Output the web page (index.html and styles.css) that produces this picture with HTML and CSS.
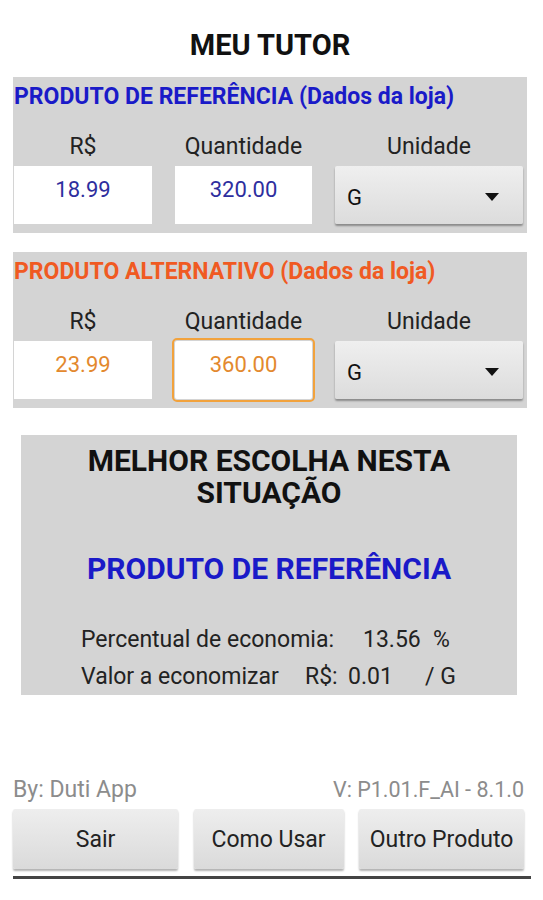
FILE: index.html
```html
<!DOCTYPE html>
<html lang="pt-br">
<head>
  <meta charset="UTF-8" />
  <meta name="viewport" content="width=device-width, initial-scale=1" />
  <title>Meu Tutor</title>
  <link rel="stylesheet" href="styles.css">
</head>
<body>
  <div class="tela">
    <h1 class="titulo">MEU TUTOR</h1>

    <section class="painel">
      <div class="painel-titulo referencia">PRODUTO DE REFERÊNCIA (Dados da loja)</div>
      <div class="campos">
        <div class="campo">
          <span class="rotulo">R$</span>
          <div class="caixa valor-ref">18.99</div>
        </div>
        <div class="campo">
          <span class="rotulo">Quantidade</span>
          <div class="caixa valor-ref">320.00</div>
        </div>
        <div class="campo">
          <span class="rotulo">Unidade</span>
          <div class="seletor">
            <span>G</span>
            <svg width="14" height="8" viewBox="0 0 14 8"><path d="M0 0h14L7 8z" fill="#111"/></svg>
          </div>
        </div>
      </div>
    </section>

    <section class="painel">
      <div class="painel-titulo alternativo">PRODUTO ALTERNATIVO (Dados da loja)</div>
      <div class="campos">
        <div class="campo">
          <span class="rotulo">R$</span>
          <div class="caixa valor-alt">23.99</div>
        </div>
        <div class="campo">
          <span class="rotulo">Quantidade</span>
          <div class="caixa valor-alt focado">360.00</div>
        </div>
        <div class="campo">
          <span class="rotulo">Unidade</span>
          <div class="seletor">
            <span>G</span>
            <svg width="14" height="8" viewBox="0 0 14 8"><path d="M0 0h14L7 8z" fill="#111"/></svg>
          </div>
        </div>
      </div>
    </section>

    <section class="resultado">
      <div class="resultado-titulo">MELHOR ESCOLHA NESTA<br>SITUAÇÃO</div>
      <div class="escolha">PRODUTO DE REFERÊNCIA</div>
      <div class="linha">
        <span class="l1-rotulo">Percentual de economia:</span>
        <span class="l1-valor">13.56</span>
        <span>%</span>
      </div>
      <div class="linha">
        <span class="l2-rotulo">Valor a economizar</span>
        <span class="l2-moeda">R$:</span>
        <span class="l2-valor">0.01</span>
        <span>/ G</span>
      </div>
    </section>

    <div class="rodape">
      <span>By: Duti App</span>
      <span class="versao">V: P1.01.F_AI - 8.1.0</span>
    </div>
    <div class="botoes">
      <button class="b-curto">Sair</button>
      <button class="b-medio">Como Usar</button>
      <button class="b-curto">Outro Produto</button>
    </div>
    <div class="barra"></div>
  </div>
</body>
</html>
```

FILE: styles.css
```css
body {
  margin: 0;
  background: #fff;
  font-family: Roboto, "Noto Sans", sans-serif;
  color: #222;
}

.tela {
  width: 543px;
  padding: 0 16px 0 13px;
  box-sizing: border-box;
}

.titulo {
  margin: 30px 0 17px;
  font-size: 29px;
  line-height: 30px;
  font-weight: bold;
  text-align: center;
  color: #111;
}

.painel {
  background: #d4d4d4;
  padding: 8px 4px 9px 1px;
  margin-bottom: 19px;
}

.painel-titulo {
  font-size: 23px;
  line-height: 24px;
  font-weight: bold;
  margin-bottom: 26px;
  white-space: nowrap;
}

.referencia {
  color: #1a1ac8;
}

.alternativo {
  color: #f05a22;
}

.campos {
  display: grid;
  grid-template-columns: 138px 137px 1fr;
  column-gap: 23px;
}

.campo {
  display: flex;
  flex-direction: column;
  align-items: stretch;
}

.rotulo {
  font-size: 23px;
  line-height: 24px;
  text-align: center;
  color: #222;
  margin-bottom: 7px;
}

.caixa {
  background: #fff;
  height: 58px;
  font-size: 22px;
  line-height: 48px;
  text-align: center;
}

.valor-ref {
  color: #2e2e9e;
}

.valor-alt {
  color: #e3892e;
}

.focado {
  outline: 2px solid #f2a23c;
  outline-offset: 1px;
  border-radius: 2px;
}

.seletor {
  height: 58px;
  background: linear-gradient(#efefef, #dcdcdc);
  box-shadow: 0 2px 2px rgba(0, 0, 0, 0.35);
  border-radius: 2px;
  display: flex;
  align-items: center;
  justify-content: space-between;
  padding: 4px 24px 0 12px;
  box-sizing: border-box;
  font-size: 22px;
  color: #111;
}

.resultado {
  background: #d4d4d4;
  margin: 27px 10px 0 8px;
  padding: 10px 0 4px;
}

.resultado-titulo {
  font-size: 30px;
  line-height: 32px;
  font-weight: bold;
  text-align: center;
  color: #111;
}

.escolha {
  margin-top: 43px;
  font-size: 30px;
  line-height: 34px;
  font-weight: bold;
  text-align: center;
  color: #1a1ac8;
}

.linha {
  display: flex;
  font-size: 23px;
  line-height: 28px;
  color: #222;
  padding-left: 60px;
  margin-top: 9px;
}

.escolha + .linha {
  margin-top: 40px;
}

.l1-rotulo {
  width: 282px;
}

.l1-valor {
  width: 70px;
}

.l2-rotulo {
  width: 224px;
}

.l2-moeda {
  width: 43px;
}

.l2-valor {
  width: 77px;
}

.rodape {
  display: flex;
  justify-content: space-between;
  margin: 83px 3px 0 0;
  font-size: 23px;
  line-height: 24px;
  color: #8c8c8c;
}

.versao {
  font-size: 21.5px;
}

.botoes {
  display: flex;
  justify-content: space-between;
  margin: 7px 3px 0 0;
}

.botoes button {
  height: 60px;
  background: linear-gradient(#eeeeee, #dadada);
  border: none;
  border-radius: 2px;
  box-shadow: 0 2px 2px rgba(0, 0, 0, 0.3);
  font-family: Roboto, "Noto Sans", sans-serif;
  font-size: 23px;
  color: #222;
  padding: 0;
}

.b-curto {
  width: 165px;
}

.b-medio {
  width: 150px;
}

.barra {
  height: 3px;
  background: #444;
  margin: 7px -4px 0 0;
}
```
